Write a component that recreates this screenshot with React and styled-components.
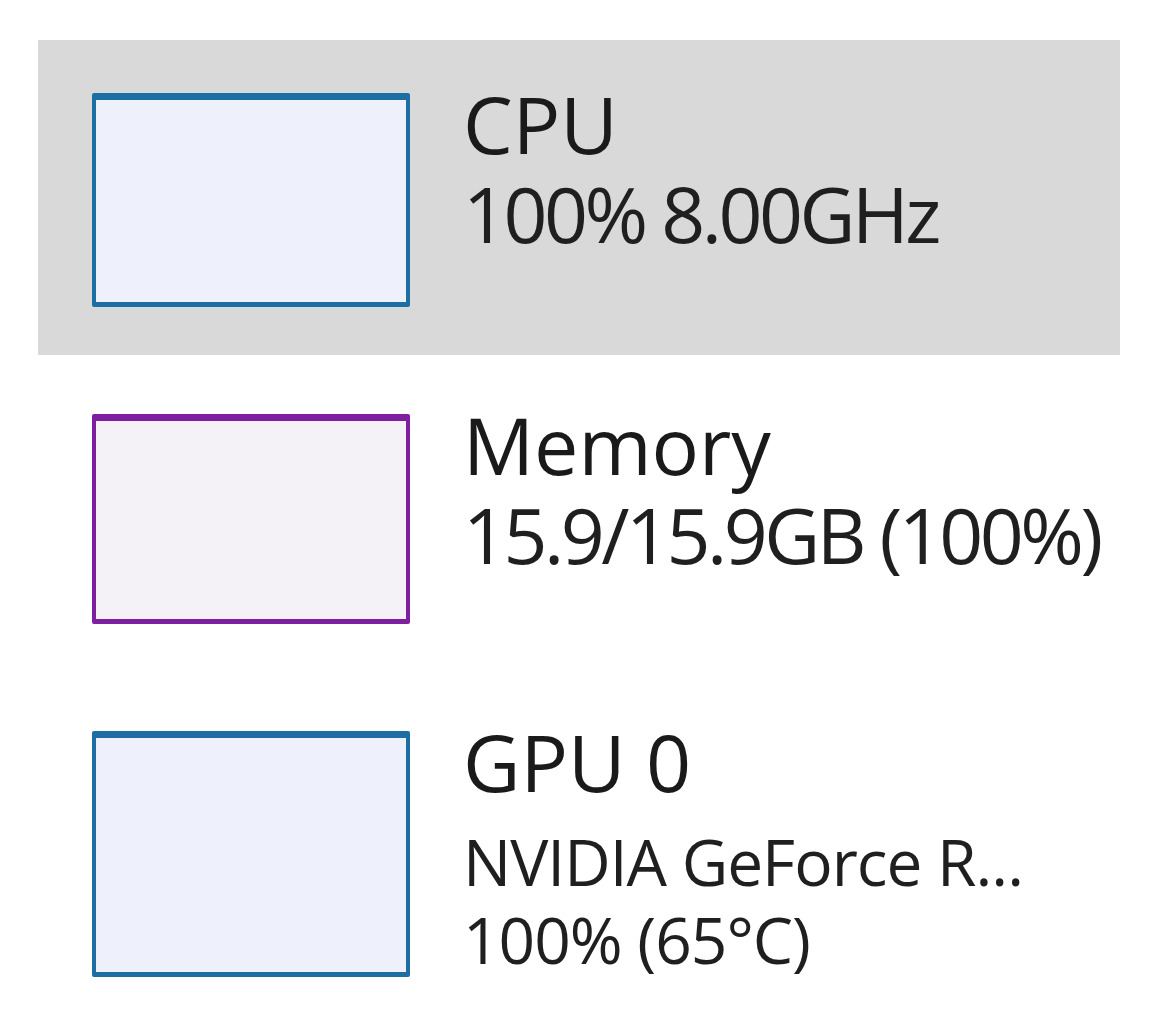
import React from "react";
import styled, { createGlobalStyle } from "styled-components";

const GlobalStyle = createGlobalStyle`
  html, body {
    margin: 0;
    padding: 0;
    background: #ffffff;
  }
  body {
    font-family: "Open Sans", "Noto Sans", "Liberation Sans", sans-serif;
    color: #1b1b1b;
  }
`;

const Page = styled.div`
  width: 1158px;
  height: 1026px;
  box-sizing: border-box;
  padding: 40px 38px 0 38px;
  background: #ffffff;
  overflow: hidden;
`;

const List = styled.div`
  display: flex;
  flex-direction: column;
  gap: 6px;
`;

const Row = styled.div`
  display: flex;
  align-items: flex-start;
  gap: 53px;
  padding: 53px 0 48px 54px;
  background: ${(p) => (p.$selected ? "#d9d9d9" : "transparent")};
`;

const Graph = styled.div`
  flex: 0 0 auto;
  box-sizing: border-box;
  width: 318px;
  height: ${(p) => p.$height}px;
  border: 4px solid ${(p) => p.$color};
  border-top-width: 7px;
  border-bottom-width: 5px;
  border-radius: 2px;
  background: ${(p) => p.$fill};
`;

const Info = styled.div`
  display: flex;
  flex-direction: column;
  margin-top: -14px;
`;

const Title = styled.div`
  font-size: 79px;
  line-height: 90px;
  letter-spacing: 0;
  color: #1a1a1a;
  white-space: nowrap;
`;

const Detail = styled.div`
  font-size: 77px;
  line-height: 90px;
  letter-spacing: -3.5px;
  color: #1f1f1f;
  white-space: nowrap;
`;

const SmallGroup = styled.div`
  display: flex;
  flex-direction: column;
  margin-top: 16px;
`;

const SmallDetail = styled.div`
  font-size: 64px;
  line-height: 78px;
  letter-spacing: -1px;
  color: #1f1f1f;
  white-space: nowrap;
`;

export default function App() {
  return (
    <>
      <GlobalStyle />
      <Page>
        <List>
          <Row $selected>
            <Graph $height={214} $color="#1d6ea3" $fill="#eef1fb" />
            <Info>
              <Title>CPU</Title>
              <Detail>100% 8.00GHz</Detail>
            </Info>
          </Row>
          <Row>
            <Graph $height={210} $color="#7e1fa0" $fill="#f4f1f7" />
            <Info>
              <Title>Memory</Title>
              <Detail>15.9/15.9GB (100%)</Detail>
            </Info>
          </Row>
          <Row>
            <Graph $height={246} $color="#1d6ea3" $fill="#eef1fb" />
            <Info>
              <Title>GPU 0</Title>
              <SmallGroup>
                <SmallDetail>NVIDIA GeForce R...</SmallDetail>
                <SmallDetail>100% (65°C)</SmallDetail>
              </SmallGroup>
            </Info>
          </Row>
        </List>
      </Page>
    </>
  );
}
